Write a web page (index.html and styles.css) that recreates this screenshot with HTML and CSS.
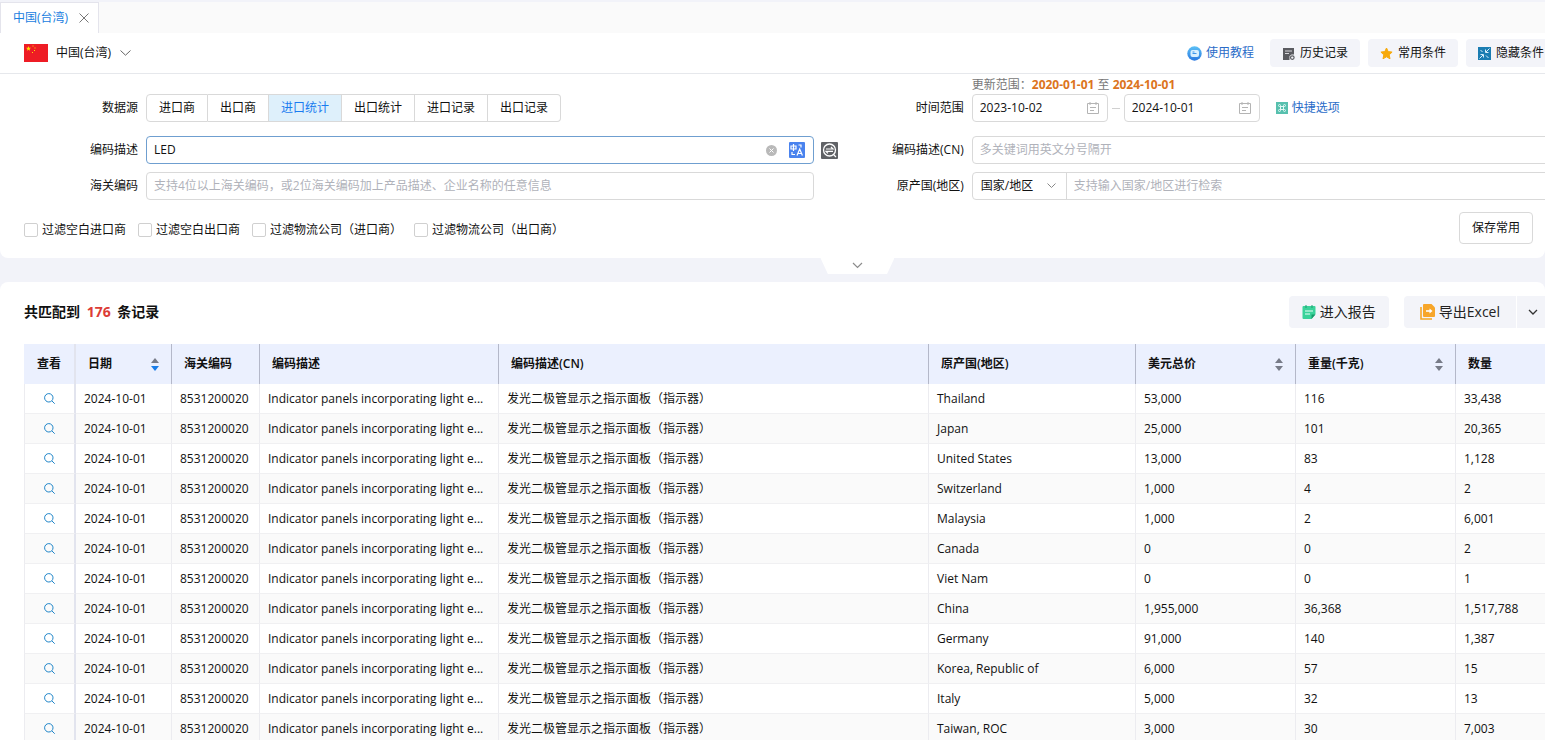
FILE: index.html
```html
<!DOCTYPE html>
<html lang="zh-CN">
<head>
<meta charset="utf-8">
<title>中国(台湾)</title>
<link rel="stylesheet" href="styles.css">
</head>
<body>
<div class="app">
  <nav class="tabs">
    <div class="tab">
      <a class="tab-link" href="#">中国(台湾)</a>
      <button class="tab-close" type="button" aria-label="关闭">
        <svg width="10" height="10" viewBox="0 0 10 10"><path d="M.5.5l9 9M9.5.5l-9 9" stroke="#777" fill="none"/></svg>
      </button>
    </div>
  </nav>

  <header class="header">
    <button class="country" type="button">
      <svg width="24" height="18" viewBox="0 0 24 18"><path fill="#ee1c25" d="M0 0h24v18H0z"/><path fill="#ffde00" d="M4.500 2l.7 1.700 1.800.1-1.400 1.200.5 1.800-1.600-1-1.500 1 .4-1.800L2 3.800l1.800-.1zM8.500 1.500h1v1h-1zM10.500 3.500h1v1h-1zM10 6h1v1h-1zM8 8h1v1H8z"/></svg>
      <span>中国(台湾)</span>
      <svg width="12" height="6" viewBox="0 0 12 6"><path d="M1.500.5L6.500 5.200l5-4.700" stroke="#666" fill="none"/></svg>
    </button>
    <div class="tools">
      <a class="tutorial" href="#">
        <svg width="15" height="15" viewBox="0 0 15 15"><defs><linearGradient id="g" x1="0" y1="0" x2="0" y2="1"><stop offset="0" stop-color="#5cc1f6"/><stop offset="1" stop-color="#2a78e0"/></linearGradient></defs><circle cx="7.500" cy="7.500" r="7.200" fill="url(#g)"/><rect x="3.500" y="4" width="8.500" height="7" rx="2" fill="#d9efff"/><path d="M5.500 7.500h4M5.500 6h2" stroke="#3f96ea"/></svg>
        使用教程</a>
      <button class="tool" type="button">
        <svg width="13" height="13" viewBox="0 0 13 13"><path fill="#5a5b60" d="M1 1h11v6.500H9.500L7.500 9v4H1z"/><path d="M3 4h7M3 6.500h4" stroke="#d8d8dc"/><circle cx="10.300" cy="10.600" r="1.800" fill="none" stroke="#5a5b60" stroke-width="1.200"/></svg>
        历史记录</button>
      <button class="tool" type="button">
        <svg width="13" height="13" viewBox="0 0 13 13"><path fill="#f7a90a" stroke="#f7a90a" stroke-linejoin="round" d="M6.500 1l1.700 3.600 3.900.5-2.900 2.700.8 4-3.500-2-3.500 2 .8-4L.9 5.100l3.900-.5z"/></svg>
        常用条件</button>
      <button class="tool" type="button">
        <svg width="13" height="13" viewBox="0 0 13 13"><path fill="#1a7db2" d="M0 0h13v13H0z"/><path d="M11.500 1.500L8 5M7.500 2.500v3h3M1.500 11.500L5 8M2.500 7.500h3v3M2.500 3l2 2M8 8.500l2.500 2.500" stroke="#d6eefa" fill="none"/></svg>
        隐藏条件</button>
    </div>
  </header>

  <form class="query">
    <div class="fields">
      <div class="column">
        <div class="row after-lg hint-space">
          <span class="label">数据源</span>
          <div class="segments">
            <button type="button">进口商</button><button type="button">出口商</button><button type="button" class="active">进口统计</button><button type="button">出口统计</button><button type="button">进口记录</button><button type="button">出口记录</button>
          </div>
        </div>
        <div class="row after-sm">
          <label class="label" for="desc">编码描述</label>
          <div class="box grow focused">
            <input id="desc" type="text" value="LED">
            <svg width="11" height="11" viewBox="0 0 11 11"><circle cx="5.500" cy="5.500" r="5.500" fill="#b9b9b9"/><path d="M3.500 3.500l4 4M7.500 3.500l-4 4" stroke="#fff"/></svg>
            <svg class="translate" width="16" height="16" viewBox="0 0 16 16"><rect width="16" height="16" rx="1" fill="#4a83ee"/><path d="M2 4h5v3H2zM4.500 2v7M3 10v2.500h3M9.500 3H12v2.500M8 13.500l2.700-6.500 2.700 6.500M9 11.500h3.500" stroke="#fff" stroke-width="1.200" fill="none"/></svg>
          </div>
          <svg class="exact" width="17" height="17" viewBox="0 0 17 17"><rect width="17" height="17" rx="1" fill="#606266"/><circle cx="8.500" cy="8" r="6" fill="none" stroke="#fff" stroke-width="1.300"/><path d="M5 7h7l-2-2M12 9.300H5l2 2M12.500 12.500l2.500 2.500" stroke="#fff" stroke-width="1.200" fill="none"/></svg>
        </div>
        <div class="row">
          <label class="label" for="hs">海关编码</label>
          <div class="box grow"><input id="hs" type="text" placeholder="支持4位以上海关编码，或2位海关编码加上产品描述、企业名称的任意信息"></div>
          <span class="exact"></span>
        </div>
      </div>
      <div class="column">
        <div class="hint">更新范围：<b>2020-01-01</b> 至 <b>2024-10-01</b></div>
        <div class="row after-lg">
          <label class="label" for="from">时间范围</label>
          <div class="box date"><input id="from" type="text" value="2023-10-02">
            <svg width="12" height="12" viewBox="0 0 12 12"><path d="M.5 1.500h11v10H.5zM3 0v3M9 0v3M3 5.500h6M3 8.500h4" stroke="#b4b4b4" fill="none"/></svg></div>
          <span class="dash"></span>
          <div class="box date"><input id="to" type="text" value="2024-10-01" aria-label="结束时间">
            <svg width="12" height="12" viewBox="0 0 12 12"><path d="M.5 1.500h11v10H.5zM3 0v3M9 0v3M3 5.500h6M3 8.500h4" stroke="#b4b4b4" fill="none"/></svg></div>
          <a class="quick" href="#"><svg width="12" height="12" viewBox="0 0 12 12"><path fill="#57c0ae" d="M0 0h12v12H0z"/><path d="M4.500 4.500v-1a1 1 0 1 0-1 1h5a1 1 0 1 0-1-1v5a1 1 0 1 0 1-1h-5a1 1 0 1 0 1 1z" stroke="#e2f8f4" fill="none"/></svg>快捷选项</a>
        </div>
        <div class="row after-sm">
          <label class="label" for="desc-cn">编码描述(CN)</label>
          <div class="box grow"><input id="desc-cn" type="text" placeholder="多关键词用英文分号隔开"></div>
        </div>
        <div class="row">
          <label class="label" for="origin">原产国(地区)</label>
          <div class="box grow">
            <div class="picker">
              <select aria-label="原产国类型"><option>国家/地区</option></select>
              <svg width="9" height="6" viewBox="0 0 9 6"><path d="M.5.5l4 4 4-4" stroke="#888" fill="none"/></svg>
            </div>
            <input id="origin" type="text" placeholder="支持输入国家/地区进行检索">
          </div>
        </div>
      </div>
    </div>
    <div class="filters">
      <label><input type="checkbox">过滤空白进口商</label>
      <label><input type="checkbox">过滤空白出口商</label>
      <label><input type="checkbox">过滤物流公司（进口商）</label>
      <label><input type="checkbox">过滤物流公司（出口商）</label>
      <button class="save" type="button">保存常用</button>
    </div>
    <button class="collapse" type="button" aria-label="展开">
      <svg width="11" height="7" viewBox="0 0 11 7"><path d="M1 1l4.500 4.500L10 1" stroke="#8c8c8c" stroke-width="1.200" fill="none"/></svg>
    </button>
  </form>

  <main class="results">
    <div class="summary">
      <h1>共匹配到 <em>176</em> 条记录</h1>
      <div class="actions">
        <button class="action report" type="button">
          <svg width="14" height="14" viewBox="0 0 14 14"><path fill="#3ad29a" d="M1.500 1h11a1 1 0 0 1 1 1v7l-4 5h-8a1 1 0 0 1-1-1V2a1 1 0 0 1 1-1z"/><path d="M4 0v3M10 0v3" stroke="#1b9f70"/><path d="M3 6h8M3 9h5" stroke="#eafff7"/><path fill="#169a6a" d="M9.500 14v-4.500h4z"/></svg>
          进入报告</button>
        <div class="split">
          <button class="action export" type="button">
            <svg width="15" height="16" viewBox="0 0 15 16"><path d="M1 3v12h11" stroke="#f5a623" stroke-width="1.600" fill="none"/><path fill="#f7a62a" d="M4 0h7.500L15 3.500V12a1 1 0 0 1-1 1H4a1 1 0 0 1-1-1V1a1 1 0 0 1 1-1z"/><path d="M6 7h5" stroke="#fff" stroke-width="1.600" fill="none"/><path fill="#fff" d="M9.500 4.500l3 2.500-3 2.500z"/></svg>
            导出Excel</button>
          <button class="action more" type="button" aria-label="更多">
            <svg width="10" height="7" viewBox="0 0 10 7"><path d="M1 1l4 4 4-4" stroke="#333" stroke-width="1.300" fill="none"/></svg>
          </button>
        </div>
      </div>
    </div>
    <table class="grid">
      <colgroup><col class="c-view"><col class="c-date"><col class="c-code"><col class="c-desc"><col class="c-cn"><col class="c-origin"><col class="c-num"><col class="c-num"><col></colgroup>
      <thead>
        <tr>
          <th class="view">查看</th>
          <th><div class="sortable">日期<svg class="sorted" width="8" height="13" viewBox="0 0 8 13"><path class="up" d="M4 0l4 5H0z"/><path class="down" d="M4 13l4-5H0z"/></svg></div></th>
          <th>海关编码</th>
          <th>编码描述</th>
          <th>编码描述(CN)</th>
          <th>原产国(地区)</th>
          <th><div class="sortable">美元总价<svg width="8" height="13" viewBox="0 0 8 13"><path class="up" d="M4 0l4 5H0z"/><path class="down" d="M4 13l4-5H0z"/></svg></div></th>
          <th><div class="sortable">重量(千克)<svg width="8" height="13" viewBox="0 0 8 13"><path class="up" d="M4 0l4 5H0z"/><path class="down" d="M4 13l4-5H0z"/></svg></div></th>
          <th>数量</th>
        </tr>
      </thead>
      <tbody id="rows"></tbody>
    </table>
  </main>
</div>
<script src="app.js"></script>
</body>
</html>
```
FILE: styles.css
```css
* { box-sizing: border-box; }

body {
  margin: 0;
  background: #f2f3f9;
  color: #111;
  font: 12px/18px "Open Sans", "Noto Sans CJK SC", sans-serif;
}

button, input, select { font: inherit; color: inherit; margin: 0; }
button { cursor: pointer; white-space: nowrap; }
a { color: #2a6cc8; text-decoration: none; }
svg { flex: none; display: block; }

.app { height: 100vh; overflow: hidden; }

.tabs { display: flex; background: #fafafa; border-top: 2px solid #f2f3f9; }
.tab {
  display: flex;
  align-items: center;
  gap: 11px;
  height: 31px;
  padding: 0 9px 0 12px;
  background: #fff;
  border: 1px solid #e4e4ec;
  border-bottom: 0;
}
.tab-link { color: #1a80e0; }
.tab-close { padding: 0; border: 0; background: none; }

.header {
  display: flex;
  align-items: center;
  justify-content: space-between;
  height: 41px;
  padding-left: 24px;
  background: #fff;
  border-bottom: 1px solid #e6e8ec;
}
.country { display: flex; align-items: center; gap: 8px; padding: 0; border: 0; background: none; }
.tools { display: flex; align-items: center; gap: 8px; margin-right: -11px; }
.tutorial { display: flex; align-items: center; gap: 4px; margin-right: 8px; }
.tool {
  display: flex;
  align-items: center;
  gap: 5px;
  height: 28px;
  padding: 0 12px;
  border: 0;
  border-radius: 4px;
  background: #f3f4f9;
}

.query { position: relative; background: #fff; padding-bottom: 14px; border-radius: 0 0 8px 8px; }
.fields { display: grid; grid-template-columns: 1fr 1fr; width: 110%; padding: 0 24px; }
.column { display: flex; flex-direction: column; min-width: 0; }
.row { display: flex; align-items: center; }
.after-lg { margin-bottom: 14px; }
.after-sm { margin-bottom: 8px; }
.hint-space { margin-top: 20px; }
.hint { height: 20px; padding: 2px 0 0 122px; color: #777; }
.hint b { color: #dc7420; }
.label { width: 114px; margin-right: 8px; text-align: right; flex: none; }

.segments { display: flex; }
.segments button {
  height: 28px;
  padding: 0 12px;
  border: 1px solid #d9d9d9;
  border-left-width: 0;
  background: #fff;
}
.segments button:first-child { border-left-width: 1px; border-radius: 4px 0 0 4px; }
.segments button:last-child { border-radius: 0 4px 4px 0; }
.segments .active { background: #def0fb; color: #1a7cf0; }

.box {
  display: flex;
  align-items: center;
  height: 28px;
  padding-right: 8px;
  border: 1px solid #d9d9d9;
  border-radius: 4px;
  background: #fff;
}
.grow { flex: 1; min-width: 0; }
.focused { border-color: #6f9fd0; }
.box input { flex: 1; min-width: 0; padding: 0 7px; border: 0; background: none; outline: 0; }
.box input::placeholder { color: #b0b2ba; }
.translate { margin-left: 12px; }
.exact { width: 17px; margin: 0 12px 0 7px; flex: none; }
.date { width: 136px; }
.dash { width: 8px; height: 1px; margin: 0 4px; background: #d0d0d0; }
.quick { display: flex; align-items: center; gap: 4px; margin-left: 16px; }
.picker { display: flex; align-items: center; width: 94px; height: 26px; padding-right: 10px; border-right: 1px solid #d9d9d9; }
.picker select { flex: 1; min-width: 0; padding: 0 0 0 8px; border: 0; background: none; appearance: none; outline: 0; }

.filters { display: flex; align-items: center; gap: 12px; padding: 12px 12px 0 24px; }
.filters label { display: flex; align-items: center; gap: 4px; padding-top: 4px; }
.filters input { appearance: none; width: 14px; height: 14px; border: 1px solid #d0d0d0; border-radius: 2px; background: #fff; }
.save { height: 32px; margin-left: auto; padding: 0 12px; border: 1px solid #d9d9d9; border-radius: 4px; background: #fff; }

.collapse {
  position: absolute;
  top: 100%;
  left: 55.5%;
  display: flex;
  justify-content: center;
  width: 74px;
  height: 16px;
  margin-left: -37px;
  padding: 4px 0 0;
  border: 0;
  background: #fff;
  clip-path: polygon(0 0, 100% 0, 90% 100%, 10% 100%);
}

.results { margin-top: 24px; padding: 14px 0 0 24px; background: #fff; border-radius: 8px 8px 0 0; }
.summary { display: flex; align-items: center; justify-content: space-between; margin-bottom: 16px; }
.summary h1 { margin: 0; font-size: 14px; font-weight: 700; }
.summary em { margin: 0 3px; color: #dc3c36; font-style: normal; }
.actions { display: flex; gap: 15px; margin-right: -4px; }
.split { display: flex; gap: 1px; }
.action {
  display: flex;
  align-items: center;
  gap: 4px;
  height: 32px;
  padding: 0 13px;
  border: 0;
  background: #f3f4f9;
  color: #222;
  font-size: 14px;
}
.report { border-radius: 4px; }
.export { padding: 0 16px; border-radius: 4px 0 0 4px; }
.more { padding: 0 11px; border-radius: 0 4px 4px 0; }

.grid { width: 111%; table-layout: fixed; border-collapse: separate; border-spacing: 0; }
.c-view { width: 52px; }
.c-date { width: 96px; }
.c-code { width: 88px; }
.c-desc { width: 239px; }
.c-cn { width: 430px; }
.c-origin { width: 207px; }
.c-num { width: 160px; }
.grid th {
  height: 40px;
  padding: 0 12px;
  background: #ebf0fe;
  border-right: 1px solid #b4b8c9;
  font-weight: 600;
  text-align: left;
}
.sortable { display: flex; align-items: center; justify-content: space-between; }
.up, .down { fill: #777b88; }
.sorted .down { fill: #1a7de8; }
.grid td {
  height: 30px;
  padding: 0 8px;
  border-right: 1px solid #ececf0;
  border-bottom: 1px solid #f0f0f2;
  background: #fff;
  overflow: hidden;
  text-overflow: ellipsis;
  white-space: nowrap;
}
.grid tr:nth-child(even) td { background: #fafafa; }
.grid .view { padding: 0; text-align: center; border-right: 2px solid #e2e4ee; }
.grid td.view { border-left: 1px solid #ececf0; }
.view button { display: block; margin: 0 auto; padding: 0; border: 0; background: none; }
```
FILE: app.js
```js
const records = [
  ["Thailand", "53,000", "116", "33,438"],
  ["Japan", "25,000", "101", "20,365"],
  ["United States", "13,000", "83", "1,128"],
  ["Switzerland", "1,000", "4", "2"],
  ["Malaysia", "1,000", "2", "6,001"],
  ["Canada", "0", "0", "2"],
  ["Viet Nam", "0", "0", "1"],
  ["China", "1,955,000", "36,368", "1,517,788"],
  ["Germany", "91,000", "140", "1,387"],
  ["Korea, Republic of", "6,000", "57", "15"],
  ["Italy", "5,000", "32", "13"],
  ["Taiwan, ROC", "3,000", "30", "7,003"]
];
const view = '<button type="button" aria-label="查看"><svg width="11" height="11" viewBox="0 0 11 11"><circle cx="4.800" cy="4.800" r="4.200" fill="none" stroke="#1d84c8"/><path d="M8 8l2.700 2.700" stroke="#1d84c8"/></svg></button>';
document.getElementById("rows").innerHTML = records.map(([origin, value, weight, count]) =>
  `<tr><td class="view">${view}</td><td>2024-10-01</td><td>8531200020</td><td>Indicator panels incorporating light e...</td><td>发光二极管显示之指示面板（指示器）</td><td>${origin}</td><td>${value}</td><td>${weight}</td><td>${count}</td></tr>`
).join("");
```
